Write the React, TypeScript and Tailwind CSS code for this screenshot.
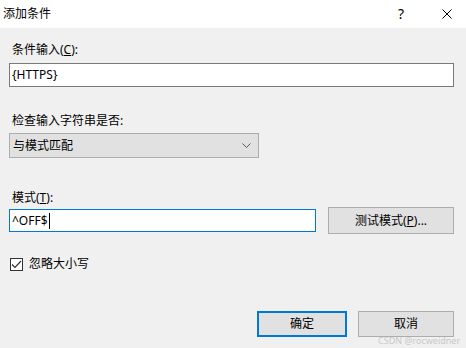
export default function App() {
  const font = { fontFamily: '"Noto Sans", "Noto Sans CJK SC", sans-serif' };
  return (
    <div
      className="w-[466px] h-[348px] bg-[#f0f0f0] flex flex-col text-[12px] text-black overflow-hidden font-['Noto_Sans','Noto_Sans_CJK_SC',sans-serif]"
      style={font}
    >
      {/* Title bar */}
      <div className="h-[28px] bg-white flex items-center shrink-0">
        <span className="pl-[3px] leading-[16px] text-[12px]">添加条件</span>
        <span className="ml-auto mr-[38px] text-[14px] leading-[16px]">?</span>
        <svg width="10" height="10" viewBox="0 0 10 10" className="mr-[14px]" stroke="#000" strokeWidth="1">
          <path d="M0.5 0.5l9 9M9.5 0.5l-9 9" />
        </svg>
      </div>

      <div className="flex flex-col pl-[9px] pr-[12px]">
        <label className="mt-[14px] ml-[3px] leading-[16px]">
          条件输入(<u>C</u>):
        </label>
        <div className="mt-[5px] h-[24px] bg-white border border-[#7a7a7a] flex items-center px-[2px] leading-[16px]">
          {"{HTTPS}"}
        </div>

        <label className="mt-[26px] ml-[3px] leading-[16px]">检查输入字符串是否:</label>
        <div className="mt-[4px] w-[250px] h-[25px] bg-[#e1e1e1] border border-[#adadad] flex items-center pl-[3px] pr-[7px]">
          <span className="leading-[16px]">与模式匹配</span>
          <svg width="9" height="5" viewBox="0 0 9 5" className="ml-auto" fill="none" stroke="#555" strokeWidth="1">
            <path d="M0.5 0.5l4 4 4-4" />
          </svg>
        </div>

        <label className="mt-[32px] ml-[3px] leading-[16px]">
          模式(<u>T</u>):
        </label>
        <div className="mt-[1px] flex items-center">
          <div className="w-[307px] h-[23px] bg-white border border-[#0078d7] flex items-center px-[2px] leading-[16px]">
            ^OFF$
            <span className="w-px h-[16px] bg-black ml-px" />
          </div>
          <button className="ml-[12px] w-[126px] h-[27px] bg-[#e1e1e1] border border-[#adadad] flex items-center justify-center leading-[16px]">
            测试模式(<u>P</u>)...
          </button>
        </div>

        <div className="mt-[22px] flex items-center ml-[1px]">
          <div className="w-[13px] h-[13px] bg-white border border-[#333] flex items-center justify-center">
            <svg width="11" height="9" viewBox="0 0 11 9" fill="none" stroke="#333" strokeWidth="1.2">
              <path d="M1 4.5l3 3 6-6.5" />
            </svg>
          </div>
          <span className="ml-[6px] leading-[16px]">忽略大小写</span>
        </div>

        <div className="mt-[39px] flex justify-end gap-[11px]">
          <button className="w-[90px] h-[26px] bg-[#e1e1e1] border-2 border-[#0078d7] flex items-center justify-center leading-[16px]">
            确定
          </button>
          <div className="relative">
            <button className="w-[96px] h-[26px] bg-[#e1e1e1] border border-[#adadad] flex items-center justify-center leading-[16px]">
              取消
            </button>
            <span className="absolute left-[20px] top-[24px] text-[9px] leading-[11px] text-[#c8c8c8] whitespace-nowrap">
              CSDN @rocweidner
            </span>
          </div>
        </div>
      </div>
    </div>
  );
}
